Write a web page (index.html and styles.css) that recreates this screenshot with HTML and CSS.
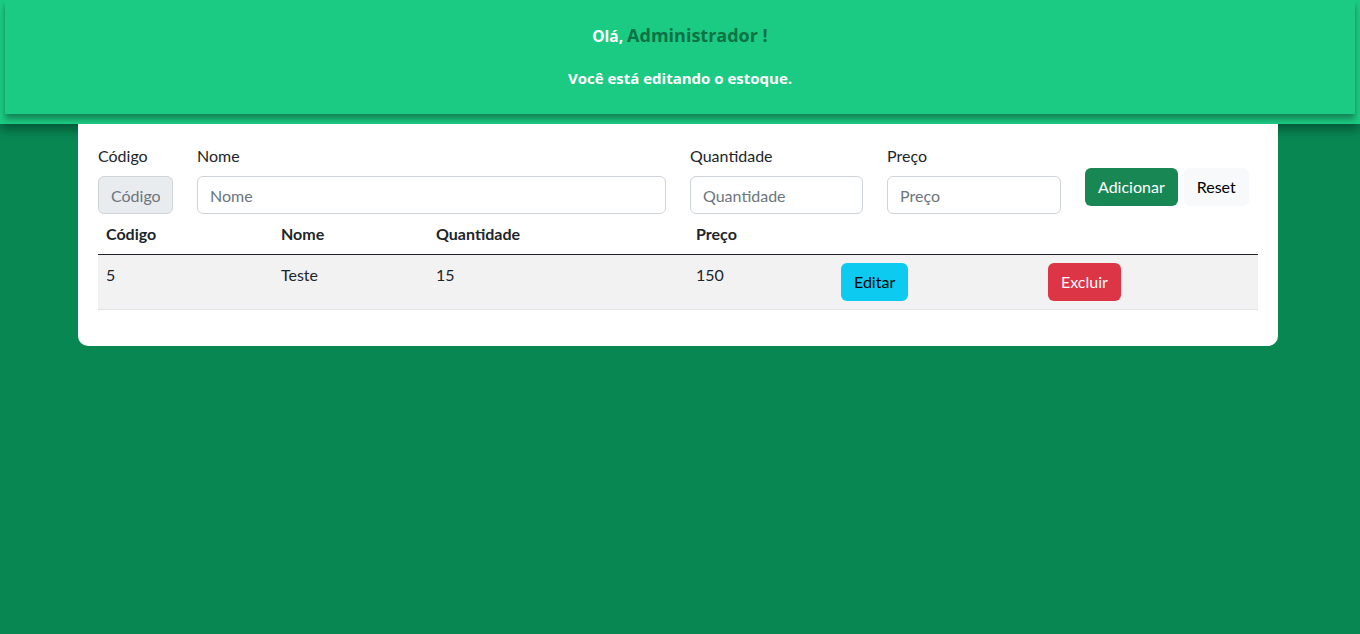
FILE: index.html
```html
<!DOCTYPE html>
<html lang="pt-BR">
<head>
<meta charset="utf-8">
<title>Estoque</title>
<link rel="stylesheet" href="styles.css">
</head>
<body>
<header class="top">
  <div class="top-box">
    <p class="hello">Olá, <span class="user">Administrador !</span></p>
    <p class="sub">Você está editando o estoque.</p>
  </div>
</header>
<main class="card">
  <form class="form-row">
    <div class="field f-code">
      <label>Código</label>
      <input class="input" type="text" placeholder="Código" disabled>
    </div>
    <div class="field f-name">
      <label>Nome</label>
      <input class="input" type="text" placeholder="Nome">
    </div>
    <div class="field f-qty">
      <label>Quantidade</label>
      <input class="input" type="text" placeholder="Quantidade">
    </div>
    <div class="field f-price">
      <label>Preço</label>
      <input class="input" type="text" placeholder="Preço">
    </div>
    <div class="actions">
      <button type="button" class="btn btn-success">Adicionar</button>
      <button type="button" class="btn btn-light">Reset</button>
    </div>
  </form>
  <table class="table">
    <colgroup>
      <col class="c1"><col class="c2"><col class="c3"><col class="c4"><col class="c5"><col class="c6">
    </colgroup>
    <thead>
      <tr><th>Código</th><th>Nome</th><th>Quantidade</th><th>Preço</th><th></th><th></th></tr>
    </thead>
    <tbody>
      <tr>
        <td>5</td><td>Teste</td><td>15</td><td>150</td>
        <td><button type="button" class="btn btn-info">Editar</button></td>
        <td><button type="button" class="btn btn-danger">Excluir</button></td>
      </tr>
    </tbody>
  </table>
</main>
</body>
</html>
```
FILE: styles.css
```css
* { box-sizing: border-box; }
html, body { margin: 0; }
body {
  background: #088753;
  font-family: "Lato", "Open Sans", sans-serif;
  font-size: 16px;
  color: #212529;
  height: 634px;
  overflow: hidden;
}
.top {
  background: #1ccb83;
  padding: 0 5px 10px;
  box-shadow: 0 6px 10px rgba(0, 0, 0, 0.35);
  position: relative;
  z-index: 1;
}
.top-box {
  background: #1ccb83;
  height: 114px;
  box-shadow: 0 5px 6px rgba(0, 0, 0, 0.35);
  text-align: center;
  font-family: "Open Sans", sans-serif;
  font-weight: 700;
  color: #fff;
  padding-top: 23px;
}
.top-box p { margin: 0; }
.hello { font-size: 15.5px; line-height: 24px; }
.user { color: #0b7344; font-size: 18px; }
.sub { font-size: 15px; line-height: 20px; margin-top: 20px !important; }
.card {
  position: relative;
  z-index: 2;
  width: 1200px;
  margin: 0 0 0 78px;
  background: #fff;
  border-radius: 0 0 10px 10px;
  padding: 20px 20px 36px;
}
.form-row {
  display: flex;
  gap: 24px;
  align-items: flex-start;
}
.field { display: flex; flex-direction: column; }
.field label { line-height: 24px; margin-bottom: 8px; }
.f-code { width: 75px; }
.f-name { width: 469px; }
.f-qty { width: 173px; }
.f-price { width: 174px; }
.input {
  font: inherit;
  height: 38px;
  padding: 6px 12px;
  border: 1px solid #ced4da;
  border-radius: 6px;
  background: #fff;
  color: #212529;
  width: 100%;
}
.input::placeholder { color: #6c757d; }
.input:disabled { background: #e9ecef; }
.actions {
  display: flex;
  gap: 6px;
  margin-top: 24px;
}
.btn {
  font: inherit;
  height: 38px;
  padding: 6px 12px;
  border: 1px solid transparent;
  border-radius: 6px;
  line-height: 24px;
}
.btn-success { background: #198754; color: #fff; }
.btn-light { background: #f8f9fa; color: #000; }
.btn-info { background: #0dcaf0; color: #000; }
.btn-danger { background: #dc3545; color: #fff; }
.table {
  width: 100%;
  border-collapse: collapse;
  table-layout: fixed;
}
.c1 { width: 175px; }
.c2 { width: 155px; }
.c3 { width: 260px; }
.c4 { width: 145px; }
.c5 { width: 207px; }
.c6 { width: 218px; }
.table th {
  text-align: left;
  padding: 8px;
  line-height: 24px;
  border-bottom: 1px solid #212529;
  font-weight: 700;
}
.table td {
  padding: 8px;
  line-height: 24px;
  vertical-align: top;
  background: #f2f2f2;
  border-bottom: 1px solid #dee2e6;
}
```
